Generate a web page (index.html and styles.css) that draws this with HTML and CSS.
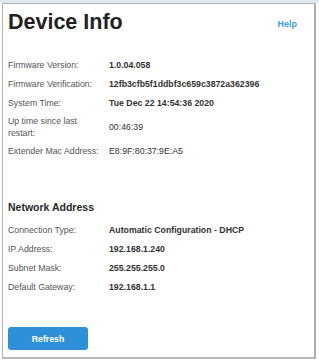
FILE: index.html
```html
<!DOCTYPE html>
<html>
<head>
<meta charset="utf-8">
<link rel="stylesheet" href="styles.css">
</head>
<body>
<div class="topstrip"></div>
<div class="panel">
  <div class="header">
    <h1 class="title">Device Info</h1>
    <a class="help">Help</a>
  </div>
  <div class="rows device-rows">
    <div class="row"><div class="label">Firmware Version:</div><div class="value">1.0.04.058</div></div>
    <div class="row"><div class="label">Firmware Verification:</div><div class="value">12fb3cfb5f1ddbf3c659c3872a362396</div></div>
    <div class="row"><div class="label">System Time:</div><div class="value">Tue Dec 22 14:54:36 2020</div></div>
    <div class="row tall"><div class="label">Up time since last restart:</div><div class="value normal">00:46:39</div></div>
    <div class="row"><div class="label">Extender Mac Address:</div><div class="value normal">E8:9F:80:37:9E:A5</div></div>
  </div>
  <h2 class="section">Network Address</h2>
  <div class="rows">
    <div class="row"><div class="label">Connection Type:</div><div class="value">Automatic Configuration - DHCP</div></div>
    <div class="row"><div class="label">IP Address:</div><div class="value">192.168.1.240</div></div>
    <div class="row"><div class="label">Subnet Mask:</div><div class="value">255.255.255.0</div></div>
    <div class="row"><div class="label">Default Gateway:</div><div class="value">192.168.1.1</div></div>
  </div>
  <div class="actions">
    <button class="btn">Refresh</button>
  </div>
</div>
</body>
</html>
```
FILE: styles.css
```css
html, body {
  margin: 0;
  padding: 0;
  background: #ffffff;
}
body {
  width: 319px;
  height: 361px;
  overflow: hidden;
  font-family: "Liberation Sans", Arial, sans-serif;
  color: #333;
}
.topstrip {
  height: 3px;
  background: #dce8f2;
}
.panel {
  margin-left: 2px;
  width: 314px;
  height: 356px;
  border: 1px solid #b4b4b4;
  border-right: 2px solid #b0b0b0;
  border-bottom: 2px solid #b8b8b8;
  box-sizing: border-box;
  padding: 0 0 0 5px;
  display: flex;
  flex-direction: column;
}
.header {
  display: flex;
  justify-content: space-between;
  align-items: center;
  height: 34px;
  padding-top: 1px;
}
.title {
  margin: 0;
  font-size: 21.5px;
  font-weight: bold;
  color: #222;
}
.help {
  font-size: 9px;
  font-weight: bold;
  color: #3d9de0;
  margin-right: 17px;
  margin-top: 3px;
}
.rows {
  display: flex;
  flex-direction: column;
}
.device-rows {
  margin-top: 16px;
}
.row {
  display: flex;
  align-items: center;
  min-height: 19px;
  font-size: 8.75px;
}
.row.tall {
  min-height: 29px;
}
.label {
  flex: 0 0 92px;
  margin-right: 9px;
  color: #555;
  line-height: 12px;
}
.value {
  font-weight: bold;
  color: #333;
}
.value.normal {
  font-weight: normal;
}
.section {
  margin: 40px 0 6px 0;
  height: 14px;
  line-height: 14px;
  font-size: 10.5px;
  font-weight: bold;
  color: #2a2a2a;
}
.actions {
  margin-top: 31px;
}
.btn {
  width: 80px;
  height: 23px;
  border: none;
  border-radius: 3px;
  background: #2f90da;
  color: #fff;
  font-family: "Liberation Sans", Arial, sans-serif;
  font-weight: bold;
  font-size: 8.75px;
  padding: 0;
}
```
